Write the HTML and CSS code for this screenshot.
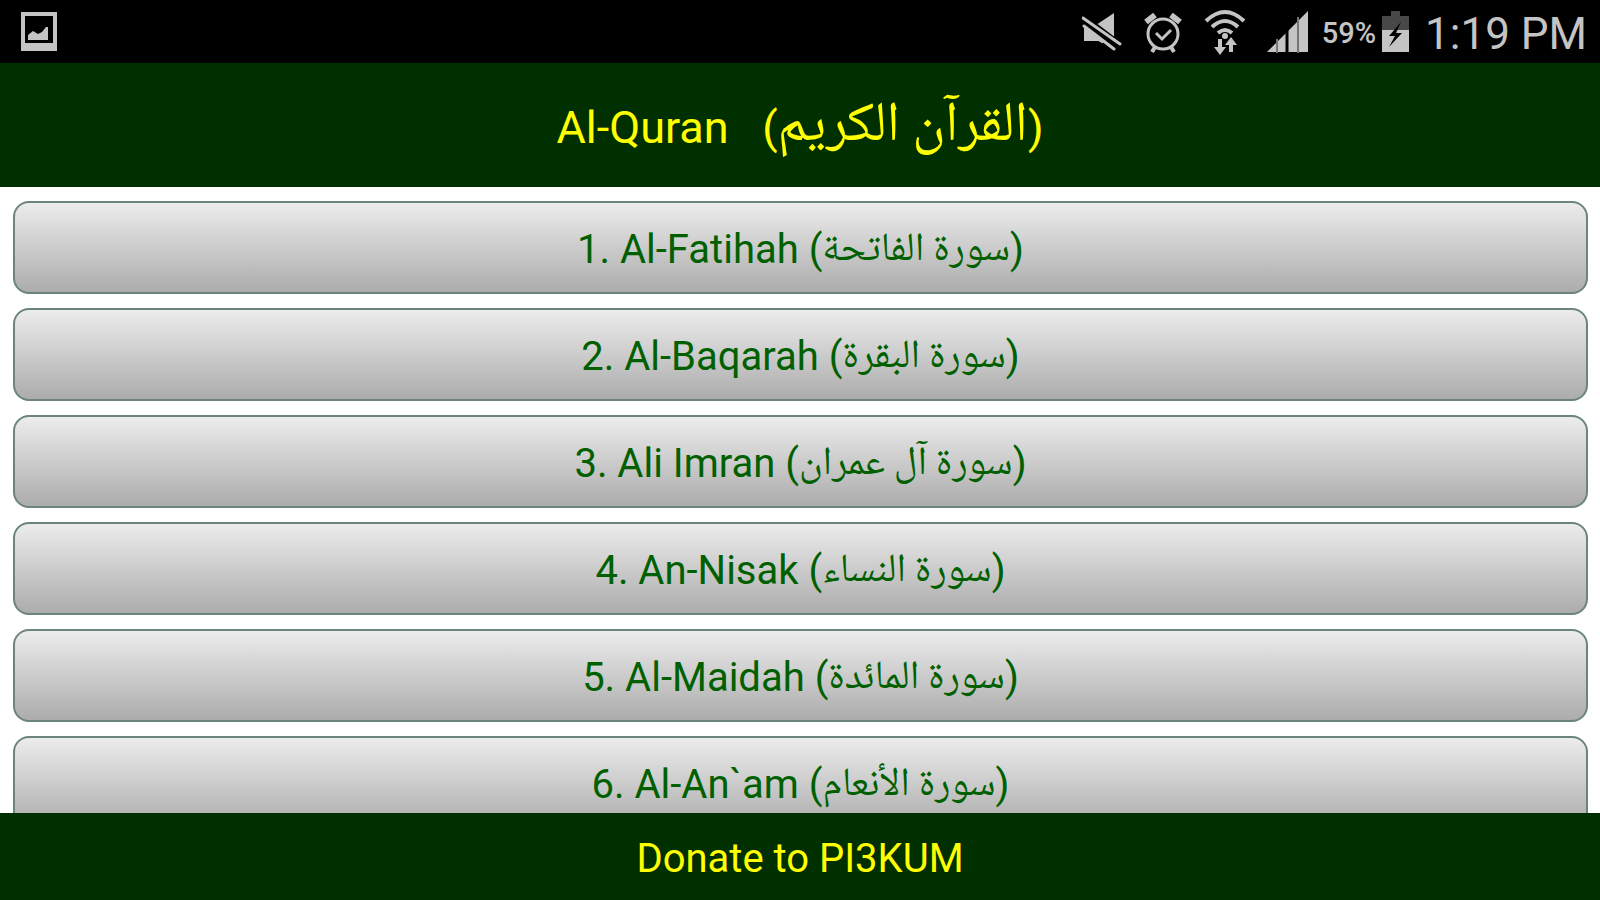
FILE: index.html
```
<!DOCTYPE html>
<html lang="en">
<head>
    <meta charset="UTF-8">
    <meta name="viewport" content="width=device-width, initial-scale=1.0">
    <title>Al-Quran</title>
    <link rel="stylesheet" href="styles.css">
</head>
<body>
    <!-- Status bar -->
    <div class="status-bar">
        <svg width="36" height="40" viewBox="0 0 36 40">
            <rect x="2" y="2" width="32" height="35" fill="none" stroke="#c4c4c4" stroke-width="4"/>
            <path d="M4 31h28v6H4z" fill="#c4c4c4"/>
            <path d="M7 28v-5l5-4 5 3 4-2 4-5h2v13z" fill="#c4c4c4"/>
        </svg>
        <div class="status-icons">
            <svg width="40" height="42" viewBox="0 0 40 42">
                <path d="M2 16h9l21-14v38L15 29H2z" fill="#c4c4c4"/>
                <path d="M0 8l38 29" stroke="#000" stroke-width="11"/>
                <path d="M24 26l12 6v10H15z" fill="#000"/>
                <path d="M2 16v14h17z" fill="#c4c4c4"/>
                <path d="M1 7l37 26M2 15l30 23" stroke="#c4c4c4" stroke-width="3" stroke-linecap="round"/>
            </svg>
            <svg width="40" height="42" viewBox="0 0 40 42">
                <circle cx="20" cy="23" r="15" fill="none" stroke="#c4c4c4" stroke-width="3"/>
                <path d="M3 11l9-7M37 11l-9-7" stroke="#c4c4c4" stroke-width="6"/>
                <path d="M12 36l-3 5M28 36l3 5" stroke="#c4c4c4" stroke-width="4"/>
                <path d="M13 22l6 6 9-9" fill="none" stroke="#c4c4c4" stroke-width="3"/>
            </svg>
            <svg width="42" height="46" viewBox="0 0 42 46">
                <path d="M2 12q19-18 38 0M8 18q13-12 26 0M14 24q7-6 14 0" fill="none" stroke="#c4c4c4" stroke-width="4"/>
                <circle cx="21" cy="27" r="3" fill="#c4c4c4"/>
                <path d="M16 30v10M27 43V34" stroke="#c4c4c4" stroke-width="4"/>
                <path d="M10 38h12l-6 8zM21 36h12l-6-8z" fill="#c4c4c4"/>
            </svg>
            <svg width="42" height="42" viewBox="0 0 42 42">
                <path d="M0 41L41 0v41z" fill="#c4c4c4"/>
                <path d="M20 12v30" stroke="#000" stroke-width="3"/>
                <path d="M10 28v14M31 6v36" stroke="#777" stroke-width="2"/>
            </svg>
            <span class="battery-level">59%</span>
            <svg class="icon-battery" width="28" height="42" viewBox="0 0 28 42">
                <path d="M0 5h9V0h9v5h9v16H0z" fill="#484848"/>
                <path d="M0 19h27v22H0z" fill="#c4c4c4"/>
                <path d="M19 11L7 25h6L7 36l13-14h-6z" fill="#000"/>
            </svg>
            <span class="clock">1:19 PM</span>
        </div>
    </div>

    <!-- Title -->
    <header class="header">
        <h1>Al-Quran &nbsp;&nbsp;(<span class="arabic" lang="ar">القرآن الكريم</span>)</h1>
    </header>

    <!-- List of surahs -->
    <main class="surah-list">
        <button class="surah">1. Al-Fatihah (<span class="arabic" lang="ar">سورة الفاتحة</span>)</button>
        <button class="surah">2. Al-Baqarah (<span class="arabic" lang="ar">سورة البقرة</span>)</button>
        <button class="surah">3. Ali Imran (<span class="arabic" lang="ar">سورة آل عمران</span>)</button>
        <button class="surah">4. An-Nisak (<span class="arabic" lang="ar">سورة النساء</span>)</button>
        <button class="surah">5. Al-Maidah (<span class="arabic" lang="ar">سورة المائدة</span>)</button>
        <button class="surah">6. Al-An`am (<span class="arabic" lang="ar">سورة الأنعام</span>)</button>
    </main>

    <button class="donate">Donate to PI3KUM</button>
</body>
</html>
```
FILE: styles.css
```
* {
    box-sizing: border-box;
}

body {
    margin: 0;
    height: 100vh;
    display: flex;
    flex-direction: column;
    overflow: hidden;
    background: #fff;
    font-family: Roboto, sans-serif;
}

/* Status bar */
.status-bar {
    flex: none;
    display: flex;
    align-items: center;
    justify-content: space-between;
    height: 63px;
    padding: 0 13px 0 21px;
    background: #000;
    color: #c4c4c4;
}

.status-icons {
    display: flex;
    align-items: center;
    gap: 21px;
}

.battery-level {
    margin-left: -8px;
    padding-top: 2px;
    font-size: 29px;
    font-weight: 500;
}

.icon-battery {
    margin-left: -15px;
}

.clock {
    margin-left: -6px;
    padding-top: 6px;
    font-size: 44px;
    line-height: 57px;
}

/* Title */
.header {
    flex: none;
    height: 124px;
    padding-top: 6px;
    background: #003000;
    color: #ffff00;
    text-align: center;
}

.header h1 {
    margin: 0;
    font-size: 45px;
    font-weight: 400;
    line-height: 118px;
}

.arabic {
    font-family: "Noto Naskh Arabic", "DejaVu Sans", sans-serif;
    line-height: 1;
}

.header .arabic {
    font-size: 56px;
    vertical-align: 3px;
}

/* Surahs */
.surah-list {
    flex: 1;
    min-height: 0;
    display: flex;
    flex-direction: column;
    gap: 14px;
    padding: 14px 12px 0 13px;
    overflow-y: auto;
    scrollbar-width: none;
}

.surah {
    flex: none;
    height: 93px;
    padding: 4px 0 0;
    border: 2px solid #6b857c;
    border-radius: 16px;
    background: linear-gradient(180deg, #ececec, #acacac);
    color: #006000;
    font-family: inherit;
    font-size: 40px;
    line-height: 80px;
    cursor: pointer;
}

.surah .arabic {
    font-size: 40px;
    vertical-align: 3px;
}

.donate {
    flex: none;
    height: 87px;
    padding: 4px 0 0;
    border: none;
    background: #003000;
    color: #ffff00;
    font-family: inherit;
    font-size: 40px;
    cursor: pointer;
}
```
